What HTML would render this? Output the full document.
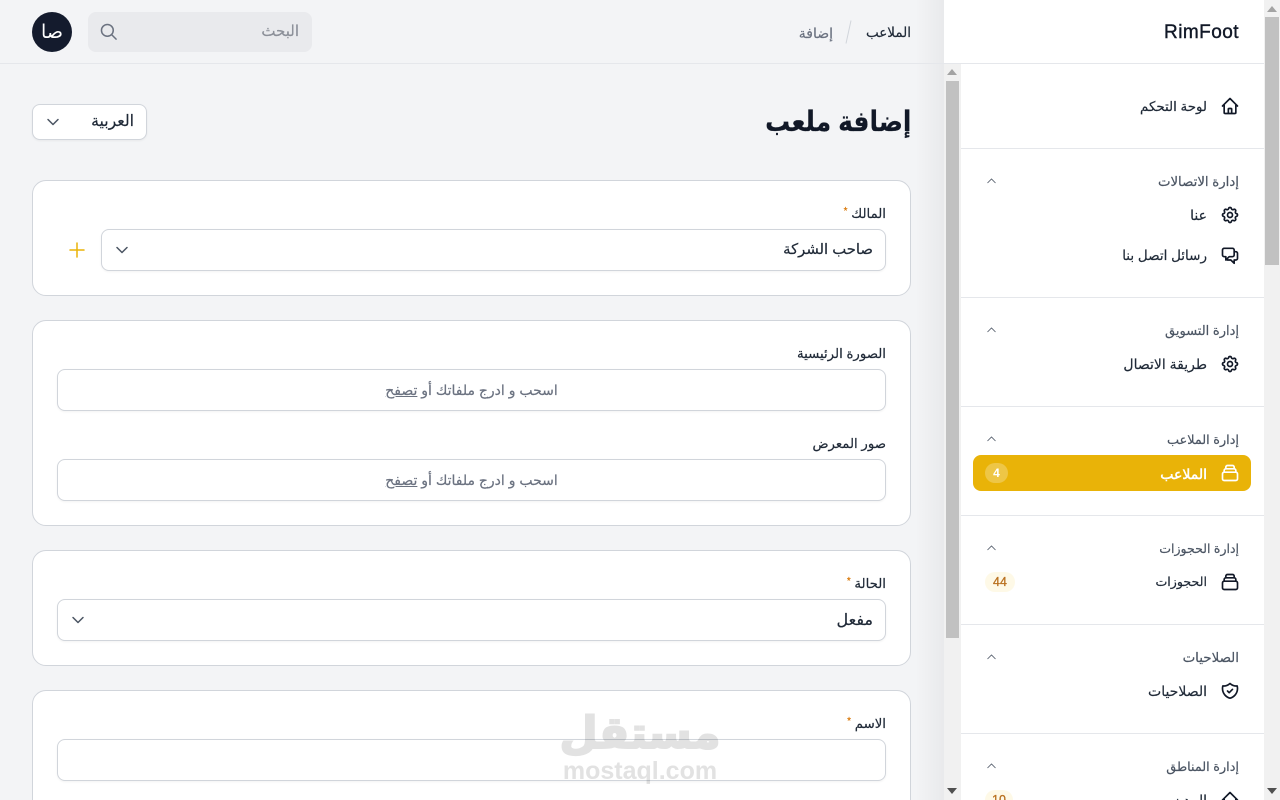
<!DOCTYPE html>
<html lang="ar">
<head>
<meta charset="utf-8">
<title>RimFoot</title>
<style>
*{box-sizing:border-box}
html,body{margin:0;padding:0;width:1280px;height:800px;overflow:hidden;background:#f3f4f6}
body{position:relative;font-family:"Liberation Sans","DejaVu Sans",sans-serif;color:#111827}
.a{position:absolute}
.t{position:absolute;direction:rtl;white-space:nowrap;line-height:20px;height:20px;-webkit-text-stroke:.2px currentColor}
.card{position:absolute;left:32px;width:879px;background:#fff;border:1px solid #d1d5db;border-radius:14px}
.inp{position:absolute;background:#fff;border:1px solid #d1d5db;border-radius:8px;box-shadow:0 1px 2px rgba(0,0,0,.05)}
.lb{font-size:13.3px;color:#1f2937}
.nav{font-size:14px;color:#1f2937}
.grp{font-size:13px;color:#4b5563}
.hr{position:absolute;left:961px;width:303px;height:1px;background:#e5e7eb}
svg{position:absolute;overflow:visible}
.ic{width:20px;height:20px;left:1220px;fill:none;stroke:#111827;stroke-width:2;stroke-linecap:round;stroke-linejoin:round}
.ch{width:11px;height:6px;left:985.5px;fill:none;stroke:#4b5563;stroke-width:.8}
.sel{width:14px;height:8px;fill:none;stroke:#4b5563;stroke-width:1.5;stroke-linecap:round;stroke-linejoin:round}
</style>
</head>
<body>
<!-- main gradient near sidebar -->
<div class="a" style="left:915px;top:0;width:29px;height:800px;background:linear-gradient(90deg,rgba(0,0,0,0),rgba(0,0,0,.045))"></div>
<div class="a" style="left:0;top:63px;width:944px;height:1px;background:#e5e7eb"></div>

<!-- top bar -->
<div class="a" style="left:32px;top:12px;width:40px;height:40px;border-radius:50%;background:#141b2d"></div>
<div class="t" style="left:32px;width:40px;top:23px;text-align:center;color:#fff;font-size:19px;-webkit-text-stroke:0">صا</div>
<div class="a" style="left:88px;top:12px;width:224px;height:40px;border-radius:8px;background:#e9eaed"></div>
<div class="t" style="right:981px;top:22px;font-size:15px;color:#8b8f98">البحث</div>
<svg style="left:99px;top:22px;width:19px;height:19px;fill:none;stroke:#6b7280;stroke-width:1.6;stroke-linecap:round" viewBox="0 0 20 20"><circle cx="8.8" cy="8.8" r="6.2"/><path d="M13.4 13.4l4.6 4.6"/></svg>
<div class="t" style="right:369px;top:23px;font-size:13.5px;color:#1f2937">الملاعب</div>
<svg style="left:845px;top:20px;width:7px;height:24px;stroke:#d1d5db;stroke-width:1" viewBox="0 0 7 24"><path d="M6 .5L1 23.5"/></svg>
<div class="t" style="right:447px;top:23px;font-size:14px;color:#6b7280">إضافة</div>

<!-- heading -->
<div class="t" style="right:369px;top:102px;height:40px;line-height:40px;font-size:28px;font-weight:700;color:#111827;transform:scaleX(.89);transform-origin:right center">إضافة ملعب</div>
<div class="inp" style="left:32px;top:104px;width:115px;height:36px"></div>
<div class="t" style="right:1146px;top:112px;font-size:15.7px;color:#1f2937">العربية</div>
<svg class="sel" style="left:46px;top:118px" viewBox="0 0 14 8"><path d="M2 1.5L7 6.5L12 1.5"/></svg>

<!-- card 1 -->
<div class="card" style="top:180px;height:116px"></div>
<div class="t lb" style="right:394px;top:202px">المالك <span style="color:#d97706;font-size:10px;vertical-align:4px">*</span></div>
<div class="inp" style="left:101px;top:229px;width:785px;height:42px"></div>
<div class="t" style="right:407px;top:240px;font-size:14.8px;color:#1f2937">صاحب الشركة</div>
<svg class="sel" style="left:115px;top:246px" viewBox="0 0 14 8"><path d="M2 1.5L7 6.5L12 1.5"/></svg>
<svg style="left:69px;top:242px;width:16px;height:16px;stroke:#eab308;stroke-width:1.5;stroke-linecap:round" viewBox="0 0 16 16"><path d="M8 1v14M1 8h14"/></svg>

<!-- card 2 -->
<div class="card" style="top:320px;height:206px"></div>
<div class="t lb" style="right:394px;top:344px">الصورة الرئيسية</div>
<div class="inp" style="left:57px;top:369px;width:829px;height:42px"></div>
<div class="t" style="left:57px;width:829px;top:380px;text-align:center;font-size:14px;color:#6b7280">اسحب و ادرج ملفاتك أو <u>تصفح</u></div>
<div class="t lb" style="right:394px;top:434px">صور المعرض</div>
<div class="inp" style="left:57px;top:459px;width:829px;height:42px"></div>
<div class="t" style="left:57px;width:829px;top:470px;text-align:center;font-size:14px;color:#6b7280">اسحب و ادرج ملفاتك أو <u>تصفح</u></div>

<!-- card 3 -->
<div class="card" style="top:550px;height:116px"></div>
<div class="t lb" style="right:394px;top:572px">الحالة <span style="color:#d97706;font-size:10px;vertical-align:4px">*</span></div>
<div class="inp" style="left:57px;top:599px;width:829px;height:42px"></div>
<div class="t" style="right:407px;top:611px;font-size:16px;color:#1f2937">مفعل</div>
<svg class="sel" style="left:71px;top:616px" viewBox="0 0 14 8"><path d="M2 1.5L7 6.5L12 1.5"/></svg>

<!-- card 4 -->
<div class="card" style="top:690px;height:130px"></div>
<div class="t lb" style="right:394px;top:712px">الاسم <span style="color:#d97706;font-size:10px;vertical-align:4px">*</span></div>
<div class="inp" style="left:57px;top:739px;width:829px;height:42px;background:transparent"></div>

<!-- watermark -->
<div class="t" style="left:540px;width:200px;top:704px;height:60px;line-height:60px;text-align:center;font-size:44px;font-weight:700;color:#e2e2e2;-webkit-text-stroke:2px #e2e2e2;mix-blend-mode:multiply">مستقل</div>
<div class="a" style="left:540px;width:200px;top:758px;text-align:center;font-size:25px;line-height:26px;font-weight:700;color:#e2e2e2;mix-blend-mode:multiply;white-space:nowrap">mostaql.com</div>

<!-- sidebar -->
<div class="a" style="left:944px;top:0;width:320px;height:800px;background:#fff"></div>
<div class="a" style="left:944px;top:63px;width:320px;height:1px;background:#e5e7eb"></div>
<div class="a" style="left:944px;top:64px;width:17px;height:736px;background:#f1f1f1"></div>
<div class="a" style="left:946px;top:81px;width:13px;height:557px;background:#c1c1c1"></div>
<svg style="left:947px;top:69px;width:10px;height:6px;fill:#a3a3a3" viewBox="0 0 10 6"><path d="M5 0l5 6H0z"/></svg>
<svg style="left:947px;top:788px;width:10px;height:6px;fill:#505050" viewBox="0 0 10 6"><path d="M5 6l5-6H0z"/></svg>

<div class="a" style="left:1264px;top:0;width:16px;height:800px;background:#f1f1f1"></div>
<div class="a" style="left:1265px;top:17px;width:14px;height:248px;background:#c1c1c1"></div>
<svg style="left:1267px;top:6px;width:10px;height:6px;fill:#a3a3a3" viewBox="0 0 10 6"><path d="M5 0l5 6H0z"/></svg>
<svg style="left:1267px;top:788px;width:10px;height:6px;fill:#505050" viewBox="0 0 10 6"><path d="M5 6l5-6H0z"/></svg>

<div class="a" style="left:1100px;width:139px;top:21px;height:24px;line-height:24px;text-align:right;font-size:19px;letter-spacing:.45px;-webkit-text-stroke:.4px #111827;color:#111827;white-space:nowrap">RimFoot</div>

<div class="hr" style="top:148px"></div>
<div class="hr" style="top:297px"></div>
<div class="hr" style="top:406px"></div>
<div class="hr" style="top:515px"></div>
<div class="hr" style="top:624px"></div>
<div class="hr" style="top:733px"></div>

<!-- dashboard -->
<svg class="ic" style="top:96px" viewBox="0 0 24 24"><path d="M3 12l2-2m0 0l7-7 7 7M5 10v10a1 1 0 001 1h3m10-11l2 2m-2-2v10a1 1 0 01-1 1h-3m-6 0a1 1 0 001-1v-4a1 1 0 011-1h2a1 1 0 011 1v4a1 1 0 001 1m-6 0h6"/></svg>
<div class="t nav" style="right:73px;top:97px;font-size:13.4px">لوحة التحكم</div>

<!-- contact group -->
<div class="t grp" style="right:41px;top:172px;font-size:13.3px">إدارة الاتصالات</div>
<svg class="ch" style="top:178px" viewBox="0 0 11 6"><path d="M1.5 5L5.5 1L9.5 5"/></svg>
<svg class="ic" style="top:205px" viewBox="0 0 24 24"><path d="M10.325 4.317c.426-1.756 2.924-1.756 3.35 0a1.724 1.724 0 002.573 1.066c1.543-.94 3.31.826 2.37 2.37a1.724 1.724 0 001.065 2.572c1.756.426 1.756 2.924 0 3.35a1.724 1.724 0 00-1.066 2.573c.94 1.543-.826 3.31-2.37 2.37a1.724 1.724 0 00-2.572 1.065c-.426 1.756-2.924 1.756-3.35 0a1.724 1.724 0 00-2.573-1.066c-1.543.94-3.31-.826-2.37-2.37a1.724 1.724 0 00-1.065-2.572c-1.756-.426-1.756-2.924 0-3.35a1.724 1.724 0 001.066-2.573c-.94-1.543.826-3.31 2.37-2.37.996.608 2.296.07 2.572-1.065z"/><path d="M15 12a3 3 0 11-6 0 3 3 0 016 0z"/></svg>
<div class="t nav" style="right:73px;top:205px">عنا</div>
<svg class="ic" style="top:245px" viewBox="0 0 24 24"><path d="M17 8h2a2 2 0 012 2v6a2 2 0 01-2 2h-2v4l-4-4H9a1.994 1.994 0 01-1.414-.586m0 0L11 14h4a2 2 0 002-2V6a2 2 0 00-2-2H5a2 2 0 00-2 2v6a2 2 0 002 2h2v4l.586-.586z"/></svg>
<div class="t nav" style="right:73px;top:246px;font-size:13.5px">رسائل اتصل بنا</div>

<!-- marketing -->
<div class="t grp" style="right:41px;top:321px">إدارة التسويق</div>
<svg class="ch" style="top:327px" viewBox="0 0 11 6"><path d="M1.5 5L5.5 1L9.5 5"/></svg>
<svg class="ic" style="top:354px" viewBox="0 0 24 24"><path d="M10.325 4.317c.426-1.756 2.924-1.756 3.35 0a1.724 1.724 0 002.573 1.066c1.543-.94 3.31.826 2.37 2.37a1.724 1.724 0 001.065 2.572c1.756.426 1.756 2.924 0 3.35a1.724 1.724 0 00-1.066 2.573c.94 1.543-.826 3.31-2.37 2.37a1.724 1.724 0 00-2.572 1.065c-.426 1.756-2.924 1.756-3.35 0a1.724 1.724 0 00-2.573-1.066c-1.543.94-3.31-.826-2.37-2.37a1.724 1.724 0 00-1.065-2.572c-1.756-.426-1.756-2.924 0-3.35a1.724 1.724 0 001.066-2.573c-.94-1.543.826-3.31 2.37-2.37.996.608 2.296.07 2.572-1.065z"/><path d="M15 12a3 3 0 11-6 0 3 3 0 016 0z"/></svg>
<div class="t nav" style="right:73px;top:354px">طريقة الاتصال</div>

<!-- stadiums -->
<div class="t grp" style="right:41px;top:430px;font-size:12.8px">إدارة الملاعب</div>
<svg class="ch" style="top:436px" viewBox="0 0 11 6"><path d="M1.5 5L5.5 1L9.5 5"/></svg>
<div class="a" style="left:973px;top:455px;width:278px;height:36px;border-radius:8px;background:#e9b308"></div>
<svg class="ic" style="top:463px;stroke:#fff" viewBox="0 0 24 24"><path d="M19 11H5m14 0a2 2 0 012 2v6a2 2 0 01-2 2H5a2 2 0 01-2-2v-6a2 2 0 012-2m14 0V9a2 2 0 00-2-2M5 11V9a2 2 0 012-2m0 0V5a2 2 0 012-2h6a2 2 0 012 2v2M7 7h10"/></svg>
<div class="t nav" style="right:73px;top:464px;color:#fff;-webkit-text-stroke:.5px #fff;font-size:14px">الملاعب</div>
<div class="a" style="left:985px;top:463px;width:23px;height:20px;border-radius:10px;background:rgba(255,255,255,.25);color:#fff;font-size:12px;font-weight:700;line-height:20px;text-align:center">4</div>

<!-- bookings -->
<div class="t grp" style="right:41px;top:539px;font-size:12.5px">إدارة الحجوزات</div>
<svg class="ch" style="top:545px" viewBox="0 0 11 6"><path d="M1.5 5L5.5 1L9.5 5"/></svg>
<svg class="ic" style="top:572px" viewBox="0 0 24 24"><path d="M19 11H5m14 0a2 2 0 012 2v6a2 2 0 01-2 2H5a2 2 0 01-2-2v-6a2 2 0 012-2m14 0V9a2 2 0 00-2-2M5 11V9a2 2 0 012-2m0 0V5a2 2 0 012-2h6a2 2 0 012 2v2M7 7h10"/></svg>
<div class="t nav" style="right:73px;top:572px;font-size:12.6px">الحجوزات</div>
<div class="a" style="left:985px;top:572px;width:30px;height:20px;border-radius:10px;background:#fef9e7;color:#b9701f;font-size:12.5px;line-height:20px;text-align:center;-webkit-text-stroke:.3px #b9701f">44</div>

<!-- permissions -->
<div class="t grp" style="right:41px;top:648px;font-size:13.4px">الصلاحيات</div>
<svg class="ch" style="top:654px" viewBox="0 0 11 6"><path d="M1.5 5L5.5 1L9.5 5"/></svg>
<svg class="ic" style="top:681px" viewBox="0 0 24 24"><path d="M9 12l2 2 4-4m5.618-4.016A11.955 11.955 0 0112 2.944a11.955 11.955 0 01-8.618 3.04A12.02 12.02 0 003 9c0 5.591 3.824 10.29 9 11.622 5.176-1.332 9-6.03 9-11.622 0-1.042-.133-2.052-.382-3.016z"/></svg>
<div class="t nav" style="right:73px;top:681px">الصلاحيات</div>

<!-- regions -->
<div class="t grp" style="right:41px;top:757px;font-size:12.8px">إدارة المناطق</div>
<svg class="ch" style="top:763px" viewBox="0 0 11 6"><path d="M1.5 5L5.5 1L9.5 5"/></svg>
<svg class="ic" style="top:790px" viewBox="0 0 24 24"><path d="M3 12l2-2m0 0l7-7 7 7M5 10v10a1 1 0 001 1h3m10-11l2 2m-2-2v10a1 1 0 01-1 1h-3m-6 0a1 1 0 001-1v-4a1 1 0 011-1h2a1 1 0 011 1v4a1 1 0 001 1m-6 0h6"/></svg>
<div class="t nav" style="right:73px;top:790px">المدن</div>
<div class="a" style="left:985px;top:790px;width:28px;height:20px;border-radius:10px;background:#fef9e7;color:#b9701f;font-size:12.5px;line-height:20px;text-align:center;-webkit-text-stroke:.3px #b9701f">10</div>
</body>
</html>
